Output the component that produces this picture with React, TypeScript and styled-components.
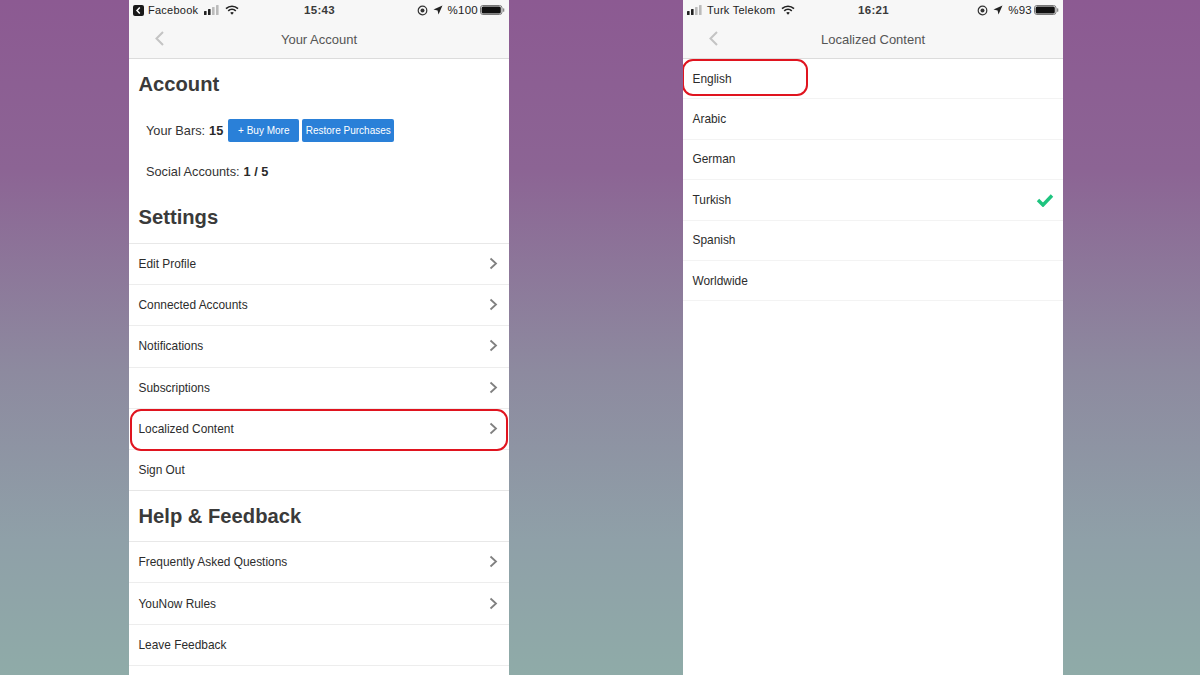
import React from "react";
import styled, { createGlobalStyle } from "styled-components";

const Global = createGlobalStyle`
  html, body { margin: 0; padding: 0; }
  body { font-family: "Liberation Sans", Arial, sans-serif; color: #333; }
`;

const Stage = styled.div`
  width: 1200px;
  height: 675px;
  overflow: hidden;
  display: flex;
  gap: 174px;
  padding-left: 129px;
  box-sizing: border-box;
  background: linear-gradient(180deg, #8c5a92 0%, #8c6494 25%, #8d8a9f 55%, #8fa0a8 80%, #8faba8 100%);
`;

const Phone = styled.div`
  position: relative;
  width: 380px;
  height: 675px;
  background: #fff;
  flex: none;
  overflow: hidden;
`;

const Top = styled.header`
  height: 59px;
  box-sizing: border-box;
  background: #f7f7f7;
  border-bottom: 1px solid #dcdcdc;
`;

const Status = styled.div`
  height: 20px;
  padding: 0 4px;
  display: grid;
  grid-template-columns: 1fr auto 1fr;
  align-items: center;
  font-size: 11px;
  color: #222;
`;

const StatusSide = styled.div<{ $end?: boolean }>`
  display: flex;
  align-items: center;
  gap: 5px;
  justify-content: ${(p) => (p.$end ? "flex-end" : "flex-start")};
  letter-spacing: 0.25px;
`;

const AppName = styled.span`
  margin: 0 1px 0 -1px;
`;

const Percent = styled.span`
  margin-right: -3px;
  font-size: 11.5px;
`;

const Clock = styled.div`
  font-weight: 700;
  font-size: 11.5px;
  letter-spacing: 0.3px;
  color: #3a3a3a;
  margin-left: 1px;
`;

const Nav = styled.div`
  position: relative;
  height: 38px;
  display: flex;
  align-items: center;
  justify-content: center;
  box-sizing: border-box;
  font-size: 13px;
  color: #555;
`;

const Back = styled.svg`
  position: absolute;
  left: 25px;
  top: 10px;
  width: 11px;
  height: 17px;
`;

const SectionTitle = styled.h2<{ $h: number; $pad: number }>`
  margin: 0;
  height: ${(p) => p.$h}px;
  padding: ${(p) => p.$pad}px 0 0 9.5px;
  box-sizing: border-box;
  font-size: 20.2px;
  line-height: 26px;
  font-weight: 700;
  color: #3a3a3a;
`;

const Info = styled.div<{ $h: number }>`
  height: ${(p) => p.$h}px;
  display: flex;
  align-items: center;
  padding-left: 17px;
  font-size: 12.75px;
  color: #333;
  b { margin-left: 4px; color: #2a2a2a; }
`;

const BlueButton = styled.span<{ $w: number; $first?: boolean }>`
  display: flex;
  align-items: center;
  justify-content: center;
  width: ${(p) => p.$w}px;
  height: 23px;
  margin-left: ${(p) => (p.$first ? 5 : 3)}px;
  background: #2a80d8;
  border-radius: 2px;
  color: #fff;
  font-size: 10px;
  white-space: nowrap;
`;

const List = styled.div`
  border-top: 1px solid #e8e8e8;
`;

const Row = styled.div<{ $h: number; $last?: boolean; $faint?: boolean }>`
  height: ${(p) => p.$h}px;
  box-sizing: border-box;
  display: flex;
  align-items: center;
  justify-content: space-between;
  padding: 0 11px 0 9.5px;
  border-bottom: 1px solid ${(p) => (p.$last ? "#e6e6e6" : p.$faint ? "#f3f3f3" : "#ededed")};
  font-size: 11.9px;
  color: #2c2c2c;
`;

const Chevron = styled.svg`
  width: 9px;
  height: 13px;
  margin-top: -1px;
`;

const Check = styled.svg`
  width: 18px;
  height: 14px;
  margin-right: -2px;
`;

const Outline = styled.div<{ $x: number; $y: number; $w: number; $h: number }>`
  position: absolute;
  left: ${(p) => p.$x}px;
  top: ${(p) => p.$y}px;
  width: ${(p) => p.$w}px;
  height: ${(p) => p.$h}px;
  box-sizing: border-box;
  border: 2px solid #e0141f;
  border-radius: 11px;
`;

const ChevronIcon = () => (
  <Chevron viewBox="0 0 9 13">
    <path d="M1.5 1.5 L7 6.5 L1.5 11.5" fill="none" stroke="#808080" strokeWidth="1.8" />
  </Chevron>
);

const BackIcon = () => (
  <Back viewBox="0 0 11 17">
    <path d="M9 2 L2.5 8.5 L9 15" fill="none" stroke="#c4c4c4" strokeWidth="2" />
  </Back>
);

const Signal = ({ filled }: { filled: number }) => (
  <svg width="16" height="10" viewBox="0 0 16 10">
    {[0, 1, 2, 3].map((i) => (
      <rect
        key={i}
        x={i * 4}
        y={6 - i * 2}
        width="2.6"
        height={4 + i * 2}
        rx="0.6"
        fill={i < filled ? "#222" : "#bbb"}
      />
    ))}
  </svg>
);

const Wifi = () => (
  <svg width="14" height="10" viewBox="0 0 14 10">
    <path d="M1 3.6 C4.4 0.4 9.6 0.4 13 3.6" fill="none" stroke="#222" strokeWidth="1.6" />
    <path d="M3.2 5.8 C5.4 3.8 8.6 3.8 10.8 5.8" fill="none" stroke="#222" strokeWidth="1.6" />
    <path d="M5.2 7.8 L7 9.8 L8.8 7.8 C7.8 6.8 6.2 6.8 5.2 7.8 Z" fill="#222" />
  </svg>
);

const Lock = () => (
  <svg width="11" height="11" viewBox="0 0 11 11">
    <circle cx="5.5" cy="5.5" r="4.3" fill="none" stroke="#333" strokeWidth="1.2" />
    <circle cx="5.5" cy="5.5" r="2" fill="#333" />
  </svg>
);

const Arrow = () => (
  <svg width="10" height="10" viewBox="0 0 10 10">
    <path d="M9.5 0.5 L0.5 4.5 L4.6 5.4 L5.5 9.5 Z" fill="#222" />
  </svg>
);

const Battery = () => (
  <svg width="25" height="10" viewBox="0 0 25 10">
    <rect x="0.5" y="0.5" width="21.5" height="9" rx="2.4" fill="none" stroke="#777" />
    <rect x="1.6" y="1.6" width="19.2" height="6.8" rx="1.5" fill="#111" />
    <rect x="23" y="3.2" width="1.3" height="3.6" rx="0.6" fill="#888" />
  </svg>
);

const BackApp = () => (
  <svg width="11" height="11" viewBox="0 0 11 11">
    <rect width="11" height="11" rx="2" fill="#1a1a1a" />
    <path d="M6.8 2.6 L4 5.5 L6.8 8.4" fill="none" stroke="#fff" strokeWidth="1.5" />
  </svg>
);

const StatusBar = ({ left, time, right }: { left: React.ReactNode; time: string; right: string }) => (
  <Status>
    <StatusSide>{left}</StatusSide>
    <Clock>{time}</Clock>
    <StatusSide $end>
      <Lock />
      <Arrow />
      <Percent>{right}</Percent>
      <Battery />
    </StatusSide>
  </Status>
);

const settings = ["Edit Profile", "Connected Accounts", "Notifications", "Subscriptions", "Localized Content"];
const help = ["Frequently Asked Questions", "YouNow Rules"];
const languages = ["English", "Arabic", "German", "Turkish", "Spanish", "Worldwide"];

export default function App() {
  return (
    <Stage>
      <Global />
      <Phone>
        <Top>
          <StatusBar
            left={
              <>
                <BackApp />
                <AppName>Facebook</AppName>
                <Signal filled={2} />
                <Wifi />
              </>
            }
            time="15:43"
            right="%100"
          />
          <Nav>
            <BackIcon />
            Your Account
          </Nav>
        </Top>
        <SectionTitle $h={51} $pad={12}>Account</SectionTitle>
        <Info $h={41}>
          Your Bars:<b>15</b>
          <BlueButton $first $w={71}>+ Buy More</BlueButton>
          <BlueButton $w={92}>Restore Purchases</BlueButton>
        </Info>
        <Info $h={41}>
          Social Accounts:<b>1 / 5</b>
        </Info>
        <SectionTitle $h={51} $pad={12}>Settings</SectionTitle>
        <List>
          {settings.map((s) => (
            <Row key={s} $h={41.2}>
              {s}
              <ChevronIcon />
            </Row>
          ))}
          <Row $h={41.2} $last>Sign Out</Row>
        </List>
        <SectionTitle $h={50} $pad={12}>Help &amp; Feedback</SectionTitle>
        <List>
          {help.map((s) => (
            <Row key={s} $h={41.3}>
              {s}
              <ChevronIcon />
            </Row>
          ))}
          <Row $h={41.3}>Leave Feedback</Row>
        </List>
        <Outline $x={1} $y={409} $w={378} $h={42} />
      </Phone>
      <Phone>
        <Top>
          <StatusBar
            left={
              <>
                <Signal filled={2} />
                <AppName>Turk Telekom</AppName>
                <Wifi />
              </>
            }
            time="16:21"
            right="%93"
          />
          <Nav>
            <BackIcon />
            Localized Content
          </Nav>
        </Top>
        <div>
          {languages.map((l) => (
            <Row key={l} $h={40.4} $faint>
              {l}
              {l === "Turkish" && (
                <Check viewBox="0 0 18 14">
                  <path d="M2 7 L7 12 L16 2.5" fill="none" stroke="#1ec47f" strokeWidth="3.4" />
                </Check>
              )}
            </Row>
          ))}
        </div>
        <Outline $x={-1} $y={59} $w={126} $h={37} />
      </Phone>
    </Stage>
  );
}
